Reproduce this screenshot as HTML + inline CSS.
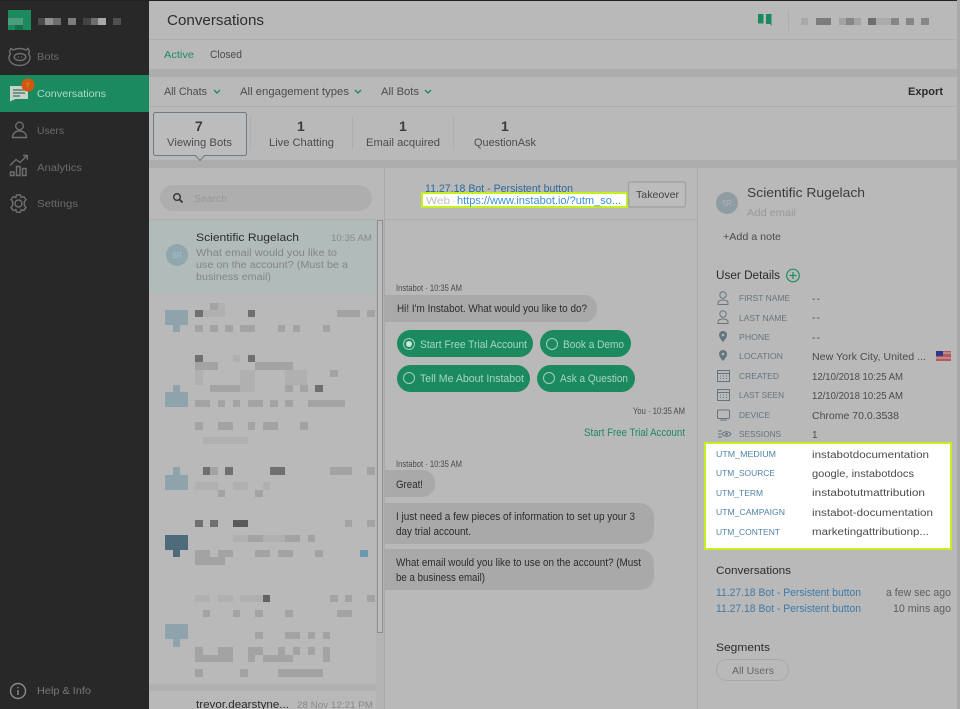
<!DOCTYPE html>
<html><head><meta charset="utf-8"><title>Conversations</title>
<style>
html,body{margin:0;padding:0;width:960px;height:709px;overflow:hidden;background:#b9b9b9}
svg{display:block;filter:blur(.35px)}
text{font-family:"Liberation Sans",sans-serif;font-size:10.5px;fill:#4c4c4c}
.side{fill:#6b6b6b;font-size:10.5px}
.lab{font-size:8.5px;fill:#64757f}
.val{font-size:10px;fill:#4c4c4c}
.utm{font-size:8.5px;fill:#4f83a8}
.uv{font-size:10px;fill:#4a4a4a}
.chat{font-size:11px;fill:#2c2c2c}
.btn{font-size:11px;fill:#a8d6c2}
.meta{font-size:9px;fill:#4c4c4c}
.prev{font-size:10.5px;fill:#858585}
.i{fill:none;stroke:#6f6f6f;stroke-width:1.4}
.d{fill:#a3a3a3}.k{fill:#707070}.l{fill:#b0b0b0}.a{fill:#8fa3ad}
</style></head><body>
<svg width="960" height="709" viewBox="0 0 960 709" xmlns="http://www.w3.org/2000/svg">
<rect width="960" height="709" fill="#b9b9b9"/>
<rect width="960" height="1" fill="#222"/>
<rect x="957" y="0" width="3" height="709" fill="#a9a9a9"/>

<!-- sidebar -->
<rect x="0" y="1" width="149" height="708" fill="#282828"/>
<rect x="0" y="75" width="149" height="37" fill="#1b8a5e"/>
<rect x="8" y="10" width="23" height="20" fill="#1b8a5e"/>
<rect x="8" y="18" width="15" height="7" fill="#4f9c7d"/>
<rect x="15" y="25" width="8" height="5" fill="#14704b"/>
<g fill="#6e6e6e"><rect x="38" y="18" width="7" height="7" fill="#4a4a4a"/><rect x="45" y="18" width="8" height="7" fill="#8f8f8f"/><rect x="53" y="18" width="8" height="7"/><rect x="68" y="18" width="8" height="7" fill="#7c7c7c"/><rect x="83" y="18" width="8" height="7" fill="#444"/><rect x="91" y="18" width="7" height="7"/><rect x="98" y="18" width="8" height="7" fill="#a8a8a8"/><rect x="113" y="18" width="8" height="7" fill="#505050"/></g>

<g class="i">
<path d="M13 50l-2-1.500-1.500 3 1 2.500c-1 1-1.500 2-1.500 3.500c0 4.500 4.500 8 10.500 8s10.500-3.500 10.500-8c0-1.500-.5-2.500-1.500-3.500l1-2.500-1.500-3-2 1.500c-2-1-4.500-1.500-6.500-1.500s-4.500.5-6.500 1.500z"/>
<ellipse cx="20" cy="57" rx="5.800" ry="3.500"/>
<path d="M18 57h.8M21.200 57h.8" stroke-width="1.600"/>
<circle cx="19.500" cy="126" r="3.800"/>
<path d="M12.500 137.500c0-4 3-6.500 7-6.500s7 2.500 7 6.500z"/>
<path d="M10.500 172h3.500v3.500h-3.500zM16.500 166.500h3.500v9h-3.500zM22.500 168.500h3.500v7h-3.500zM10 165.500l6-6 4 3 7-7M23 155.500h4.300v4.300"/>
<circle cx="18.500" cy="203.500" r="3.500"/>
<path d="M16.500 195h4l.7 2.600 2.500-1 2.300 3-1.700 2.100v3.800l1.700 2.100-2.300 3-2.500-1-.7 2.600h-4l-.7-2.600-2.500 1-2.300-3 1.700-2.100v-3.800l-1.700-2.100 2.300-3 2.500 1z"/>
<circle cx="18" cy="691" r="7.500" stroke="#8a8a8a"/>
<path d="M18 690v5M18 687v1.200" stroke="#8a8a8a"/>
</g>
<path d="M10 86h18v13H15.500l-5.500 2.500z" fill="#c3d3ca"/>
<path d="M13 90h12M13 93h12M13 96h7" stroke="#4c6f5f" stroke-width="1.200"/>
<circle cx="28" cy="85" r="6.500" fill="#d4570f"/>
<text x="26" y="87.500" style="font-size:6px;fill:#e59a6c">7</text>

<text class="side" x="37" y="60" textLength="22" lengthAdjust="spacingAndGlyphs">Bots</text>
<text x="37" y="97" textLength="69" lengthAdjust="spacingAndGlyphs" style="fill:#aedcc6">Conversations</text>
<text class="side" x="37" y="134" textLength="27" lengthAdjust="spacingAndGlyphs">Users</text>
<text class="side" x="37" y="171" textLength="45" lengthAdjust="spacingAndGlyphs">Analytics</text>
<text class="side" x="37" y="207" textLength="41" lengthAdjust="spacingAndGlyphs">Settings</text>
<text class="side" x="37" y="694" textLength="54" lengthAdjust="spacingAndGlyphs" style="fill:#787878">Help &amp; Info</text>

<!-- top bars -->
<rect x="149" y="39" width="808" height="1" fill="#aeaeae"/>
<rect x="149" y="69" width="808" height="8" fill="#adadad"/>
<rect x="149" y="106" width="808" height="1" fill="#aeaeae"/>
<rect x="149" y="160" width="808" height="8" fill="#adadad"/>
<text x="167" y="25" textLength="97" lengthAdjust="spacingAndGlyphs" style="font-size:14.500px;fill:#2e2e2e">Conversations</text>
<text x="164" y="58" textLength="30" lengthAdjust="spacingAndGlyphs" style="fill:#1f8a60">Active</text>
<text x="210" y="58" textLength="32" lengthAdjust="spacingAndGlyphs" style="font-size:11px">Closed</text>
<path d="M758 14h5.500v9.500h-5.500zM766 14h5.500v10l.5 2-2-2h-4z" fill="#1b8a5e"/>
<rect x="788" y="10" width="1" height="21" fill="#adadad"/>
<g class="d"><rect x="801" y="18" width="7" height="7" fill="#a9a9a9"/><rect x="816" y="18" width="15" height="7" fill="#7c7c7c"/><rect x="839" y="18" width="22" height="7"/><rect x="846" y="18" width="8" height="7" fill="#868686"/><rect x="868" y="18" width="8" height="7" fill="#6e6e6e"/><rect x="876" y="18" width="15" height="7" fill="#ababab"/><rect x="891" y="18" width="8" height="7" fill="#868686"/><rect x="906" y="18" width="8" height="7" fill="#868686"/><rect x="921" y="18" width="8" height="7" fill="#868686"/></g>

<text x="164" y="95" textLength="43" lengthAdjust="spacingAndGlyphs" style="font-size:11px">All Chats</text>
<text x="240" y="95" textLength="109" lengthAdjust="spacingAndGlyphs" style="font-size:11px">All engagement types</text>
<text x="381" y="95" textLength="38" lengthAdjust="spacingAndGlyphs" style="font-size:11px">All Bots</text>
<g fill="none" stroke="#1f8a60" stroke-width="1.400"><path d="M214 90l3 3 3-3M355 90l3 3 3-3M425 90l3 3 3-3"/></g>
<text x="908" y="95" textLength="35" lengthAdjust="spacingAndGlyphs" style="font-size:11px;font-weight:bold;fill:#2b2b2b">Export</text>

<path d="M155.500 112.500h89a2 2 0 0 1 2 2v39a2 2 0 0 1-2 2h-40l-4.500 5-4.500-5h-40a2 2 0 0 1-2-2v-39a2 2 0 0 1 2-2z" fill="#bcbcbc" stroke="#6b7d85"/>
<g fill="#aeaeae"><rect x="250" y="116" width="1" height="34"/><rect x="352" y="116" width="1" height="34"/><rect x="453" y="116" width="1" height="34"/></g>
<text x="195" y="131" style="font-size:14px;font-weight:bold;fill:#3c3c3c">7</text>
<text x="297" y="131" style="font-size:14px;font-weight:bold;fill:#3c3c3c">1</text>
<text x="399" y="131" style="font-size:14px;font-weight:bold;fill:#3c3c3c">1</text>
<text x="501" y="131" style="font-size:14px;font-weight:bold;fill:#3c3c3c">1</text>
<text x="167" y="146" textLength="65" lengthAdjust="spacingAndGlyphs" style="font-size:11px">Viewing Bots</text>
<text x="269" y="146" textLength="65" lengthAdjust="spacingAndGlyphs" style="font-size:11px">Live Chatting</text>
<text x="366" y="146" textLength="74" lengthAdjust="spacingAndGlyphs" style="font-size:11px">Email acquired</text>
<text x="474" y="146" textLength="62" lengthAdjust="spacingAndGlyphs" style="font-size:11px">QuestionAsk</text>

<!-- column dividers -->
<rect x="384" y="168" width="1" height="541" fill="#aaa"/>
<rect x="697" y="168" width="1" height="541" fill="#aaa"/>

<!-- list -->
<rect x="160" y="185" width="212" height="26" rx="13" fill="#aeaeae"/>
<circle cx="177" cy="197" r="3.300" fill="none" stroke="#333" stroke-width="1.400"/>
<path d="M179.500 199.500l3 3" stroke="#333" stroke-width="1.600"/>
<text x="194" y="202" textLength="33" lengthAdjust="spacingAndGlyphs" style="fill:#979797">Search</text>
<rect x="149" y="219" width="235" height="1" fill="#aeaeae"/>
<rect x="149" y="220" width="227" height="73" fill="#b1bbba"/>
<rect x="376" y="219" width="8" height="490" fill="#b4b4b4"/>
<rect x="377.500" y="220.500" width="5" height="412" fill="#bcbcbc" stroke="#8f8f8f"/>
<circle cx="177" cy="255" r="11" fill="#8fa7ad"/>
<text x="172" y="258" textLength="10" lengthAdjust="spacingAndGlyphs" style="font-size:8px;fill:#aac0c6">SR</text>
<text x="196" y="241" textLength="103" lengthAdjust="spacingAndGlyphs" style="font-size:11px;fill:#2c2c2c">Scientific Rugelach</text>
<text x="331" y="241" textLength="41" lengthAdjust="spacingAndGlyphs" style="font-size:9.500px;fill:#8a8a8a">10:35 AM</text>
<text class="prev" x="196" y="256" textLength="141" lengthAdjust="spacingAndGlyphs">What email would you like to</text>
<text class="prev" x="196" y="268" textLength="152" lengthAdjust="spacingAndGlyphs">use on the account? (Must be a</text>
<text class="prev" x="196" y="280" textLength="75" lengthAdjust="spacingAndGlyphs">business email)</text>

<!-- pixelated rows -->
<g>
<path class="a" d="M165 310h23v15h-8v7h-7v-7h-8z"/>
<path class="a" d="M173 385h7v7h8v15h-23v-15h8z"/>
<path class="a" d="M165 475h8v-8h7v8h8v15h-23z"/>
<path d="M165 535h23v15h-8v7h-7v-7h-8z" fill="#4d6b7a"/>
<path class="a" d="M165 624h23v15h-8v8h-7v-8h-8z"/>
<g class="k">
<rect x="195" y="310" width="8" height="7"/><rect x="248" y="310" width="7" height="7"/>
<rect x="195" y="355" width="8" height="7"/><rect x="248" y="355" width="7" height="7"/>
<rect x="203" y="467" width="7" height="8"/><rect x="225" y="467" width="8" height="8"/><rect x="270" y="467" width="15" height="8"/>
<rect x="195" y="520" width="8" height="7"/><rect x="210" y="520" width="8" height="7"/><rect x="233" y="520" width="15" height="7" fill="#5a5a5a"/>
<rect x="263" y="595" width="7" height="7" fill="#636363"/>
<rect x="315" y="385" width="8" height="7"/>
</g>
<g class="d">
<rect x="210" y="303" width="8" height="7"/><rect x="337" y="310" width="23" height="7"/><rect x="367" y="310" width="8" height="7"/>
<rect x="195" y="325" width="8" height="7"/><rect x="210" y="325" width="8" height="7"/><rect x="225" y="325" width="8" height="7"/><rect x="240" y="325" width="15" height="7"/><rect x="278" y="325" width="7" height="7"/><rect x="293" y="325" width="7" height="7"/><rect x="323" y="325" width="7" height="7"/>
<rect x="195" y="362" width="23" height="8"/><rect x="255" y="362" width="38" height="8"/><rect x="330" y="370" width="8" height="7"/>
<rect x="210" y="385" width="30" height="7"/><rect x="285" y="385" width="8" height="7"/><rect x="300" y="385" width="8" height="7"/>
<rect x="195" y="400" width="15" height="7"/><rect x="218" y="400" width="7" height="7"/><rect x="233" y="400" width="7" height="7"/><rect x="248" y="400" width="15" height="7"/><rect x="270" y="400" width="8" height="7"/><rect x="285" y="400" width="8" height="7"/><rect x="308" y="400" width="37" height="7"/>
<rect x="195" y="422" width="8" height="8"/><rect x="218" y="422" width="15" height="8"/><rect x="248" y="422" width="7" height="8"/><rect x="263" y="422" width="15" height="8"/><rect x="300" y="422" width="8" height="8"/>
<rect x="210" y="467" width="8" height="8"/><rect x="330" y="467" width="22" height="8"/><rect x="367" y="467" width="8" height="8"/>
<rect x="218" y="490" width="7" height="7"/><rect x="255" y="490" width="8" height="7"/>
<rect x="345" y="520" width="7" height="7"/><rect x="367" y="520" width="8" height="7"/>
<rect x="248" y="535" width="15" height="7"/><rect x="285" y="535" width="15" height="7"/><rect x="308" y="535" width="7" height="7"/>
<rect x="195" y="550" width="15" height="7"/><rect x="218" y="550" width="15" height="7"/><rect x="255" y="550" width="15" height="7"/><rect x="278" y="550" width="15" height="7"/><rect x="315" y="550" width="8" height="7"/>
<rect x="195" y="557" width="8" height="8"/><rect x="203" y="557" width="22" height="8"/>
<rect x="330" y="595" width="8" height="7"/><rect x="345" y="595" width="7" height="7"/><rect x="367" y="595" width="8" height="7"/>
<rect x="203" y="610" width="7" height="7"/><rect x="233" y="610" width="7" height="7"/><rect x="255" y="610" width="8" height="7"/><rect x="285" y="610" width="8" height="7"/><rect x="337" y="610" width="15" height="7"/>
<rect x="255" y="632" width="8" height="7"/><rect x="285" y="632" width="15" height="7"/><rect x="308" y="632" width="7" height="7"/><rect x="323" y="632" width="7" height="7"/>
<rect x="195" y="647" width="8" height="8"/><rect x="218" y="647" width="15" height="15"/><rect x="248" y="647" width="15" height="8"/><rect x="278" y="647" width="7" height="8"/><rect x="293" y="647" width="7" height="8"/><rect x="308" y="647" width="7" height="8"/><rect x="323" y="647" width="7" height="15"/>
<rect x="195" y="655" width="38" height="7"/><rect x="248" y="655" width="7" height="7"/><rect x="263" y="655" width="30" height="7"/>
<rect x="195" y="669" width="8" height="8"/><rect x="240" y="669" width="8" height="8"/><rect x="278" y="669" width="45" height="8"/>
</g>
<g class="l">
<rect x="218" y="303" width="7" height="14"/><rect x="203" y="310" width="15" height="7"/>
<rect x="233" y="355" width="7" height="7"/><rect x="195" y="370" width="8" height="15"/><rect x="240" y="370" width="15" height="22"/><rect x="285" y="370" width="22" height="15"/>
<rect x="203" y="437" width="45" height="7"/><rect x="195" y="482" width="23" height="8"/><rect x="233" y="482" width="15" height="8"/><rect x="263" y="482" width="7" height="8"/>
<rect x="195" y="595" width="15" height="7"/><rect x="218" y="595" width="15" height="7"/><rect x="240" y="595" width="23" height="7"/>
<rect x="233" y="535" width="15" height="7"/><rect x="263" y="535" width="22" height="7"/>
</g>
<rect x="360" y="550" width="8" height="7" fill="#6b9ab0"/>
<rect x="149" y="684" width="227" height="7" fill="#b1b1b1"/>
</g>
<text x="196" y="708" textLength="93" lengthAdjust="spacingAndGlyphs" style="font-size:11px;fill:#2c2c2c">trevor.dearstyne...</text>
<text x="297" y="708" textLength="76" lengthAdjust="spacingAndGlyphs" style="font-size:9.500px;fill:#8a8a8a">28 Nov 12:21 PM</text>

<!-- chat header -->
<rect x="385" y="219" width="312" height="1" fill="#aeaeae"/>
<text x="425" y="192" textLength="148" lengthAdjust="spacingAndGlyphs" style="fill:#2f6a99;font-size:11px">11.27.18 Bot - Persistent button</text>
<rect x="422" y="193" width="205" height="14" fill="#fff" stroke="#c6ef1e" stroke-width="2"/>
<text x="426" y="204" textLength="24" lengthAdjust="spacingAndGlyphs" style="fill:#bdbdbd">Web</text>
<text x="452" y="204" style="fill:#bdbdbd">·</text>
<text x="457" y="204" textLength="164" lengthAdjust="spacingAndGlyphs" style="fill:#3a8fd9;font-size:11px">https://www.instabot.io/?utm_so...</text>
<rect x="628.500" y="182" width="57" height="25" rx="2" fill="#bcbcbc" stroke="#a3a3a3" stroke-width="1.500"/>
<text x="636" y="198" textLength="43" lengthAdjust="spacingAndGlyphs" style="fill:#444">Takeover</text>

<!-- chat body -->
<text class="meta" x="396" y="291" textLength="66" lengthAdjust="spacingAndGlyphs">Instabot · 10:35 AM</text>
<path d="M385 295h202a14 14 0 0 1 0 27H385z" fill="#a9a9a9"/>
<text class="chat" x="397" y="312" textLength="190" lengthAdjust="spacingAndGlyphs">Hi! I'm Instabot. What would you like to do?</text>
<g fill="#1b8a5e">
<rect x="397" y="330" width="136" height="27" rx="13.500"/>
<rect x="540" y="330" width="91" height="27" rx="13.500"/>
<rect x="397" y="365" width="133" height="27" rx="13.500"/>
<rect x="537" y="365" width="98" height="27" rx="13.500"/>
</g>
<g fill="none" stroke="#9fd2bc">
<circle cx="409" cy="344" r="5.500"/><circle cx="552" cy="344" r="5.500"/><circle cx="409" cy="378" r="5.500"/><circle cx="549" cy="378" r="5.500"/>
</g>
<circle cx="409" cy="344" r="3" fill="#cfe8dc"/>
<text class="btn" x="420" y="348" textLength="107" lengthAdjust="spacingAndGlyphs">Start Free Trial Account</text>
<text class="btn" x="563" y="348" textLength="61" lengthAdjust="spacingAndGlyphs">Book a Demo</text>
<text class="btn" x="420" y="382" textLength="104" lengthAdjust="spacingAndGlyphs">Tell Me About Instabot</text>
<text class="btn" x="560" y="382" textLength="68" lengthAdjust="spacingAndGlyphs">Ask a Question</text>
<text class="meta" x="633" y="414" textLength="52" lengthAdjust="spacingAndGlyphs">You · 10:35 AM</text>
<text x="584" y="436" textLength="101" lengthAdjust="spacingAndGlyphs" style="font-size:11px;fill:#1b8a5e">Start Free Trial Account</text>
<text class="meta" x="396" y="467" textLength="66" lengthAdjust="spacingAndGlyphs">Instabot · 10:35 AM</text>
<g fill="#a9a9a9">
<path d="M385 470h37a13 13 0 0 1 0 27H385z"/>
<path d="M385 503h255a14 14 0 0 1 14 14v13a14 14 0 0 1-14 14H385z"/>
<path d="M385 549h255a14 14 0 0 1 14 14v13a14 14 0 0 1-14 14H385z"/>
</g>
<text class="chat" x="396" y="488" textLength="27" lengthAdjust="spacingAndGlyphs">Great!</text>
<text class="chat" x="396" y="520" textLength="239" lengthAdjust="spacingAndGlyphs">I just need a few pieces of information to set up your 3</text>
<text class="chat" x="396" y="535" textLength="75" lengthAdjust="spacingAndGlyphs">day trial account.</text>
<text class="chat" x="396" y="566" textLength="245" lengthAdjust="spacingAndGlyphs">What email would you like to use on the account? (Must</text>
<text class="chat" x="396" y="581" textLength="89" lengthAdjust="spacingAndGlyphs">be a business email)</text>

<!-- right panel -->
<circle cx="727" cy="203" r="11" fill="#8f9ca3"/>
<text x="722" y="206" textLength="10" lengthAdjust="spacingAndGlyphs" style="font-size:8px;fill:#aab6bb">SR</text>
<text x="747" y="197" textLength="118" lengthAdjust="spacingAndGlyphs" style="font-size:13px;fill:#3c3c3c">Scientific Rugelach</text>
<text x="747" y="216" textLength="49" lengthAdjust="spacingAndGlyphs" style="fill:#999">Add email</text>
<text x="723" y="240" textLength="58" lengthAdjust="spacingAndGlyphs">+Add a note</text>
<text x="716" y="279" textLength="64" lengthAdjust="spacingAndGlyphs" style="font-size:11.500px;fill:#2c2c2c">User Details</text>
<circle cx="793" cy="275.500" r="6.300" fill="none" stroke="#1f8f63" stroke-width="1.200"/>
<path d="M789.500 275.500h7M793 272v7" stroke="#1f8f63" stroke-width="1.300"/>

<g fill="none" stroke="#64757f" stroke-width="1">
<circle cx="723" cy="295" r="3.200"/><path d="M718 304.500v-1.500c0-2 2-3 5-3s5 1 5 3v1.500z"/>
<circle cx="723" cy="314" r="3.200"/><path d="M718 323.500v-1.500c0-2 2-3 5-3s5 1 5 3v1.500z"/>
<rect x="717.500" y="370.500" width="12" height="11"/><path d="M717.500 373.500h12M720 376h1M723 376h1M726 376h1M720 378.500h1M723 378.500h1M726 378.500h1"/>
<rect x="717.500" y="389.500" width="12" height="11"/><path d="M717.500 392.500h12M720 395h1M723 395h1M726 395h1M720 397.500h1M723 397.500h1M726 397.500h1"/>
<rect x="717.500" y="410" width="12" height="8.500" rx="1"/><path d="M720 420h7"/>
<path d="M718 431h4M718 434h3M718 437h4M722 434c2-3 7-3 9 0c-2 3-7 3-9 0z"/>
</g>
<circle cx="726.500" cy="434" r="1.300" fill="#64757f"/>
<g fill="#64757f">
<path d="M723 331a4 4 0 0 1 4 4c0 3-4 7-4 7s-4-4-4-7a4 4 0 0 1 4-4z"/>
<path d="M723 350a4 4 0 0 1 4 4c0 3-4 7-4 7s-4-4-4-7a4 4 0 0 1 4-4z"/>
</g>
<circle cx="723" cy="335" r="1.300" fill="#b9b9b9"/><circle cx="723" cy="354" r="1.300" fill="#b9b9b9"/>

<text class="lab" x="739" y="301" textLength="51" lengthAdjust="spacingAndGlyphs">FIRST NAME</text>
<text class="lab" x="739" y="321" textLength="48" lengthAdjust="spacingAndGlyphs">LAST NAME</text>
<text class="lab" x="739" y="340" textLength="31" lengthAdjust="spacingAndGlyphs">PHONE</text>
<text class="lab" x="739" y="359" textLength="44" lengthAdjust="spacingAndGlyphs">LOCATION</text>
<text class="lab" x="739" y="379" textLength="40" lengthAdjust="spacingAndGlyphs">CREATED</text>
<text class="lab" x="739" y="398" textLength="45" lengthAdjust="spacingAndGlyphs">LAST SEEN</text>
<text class="lab" x="739" y="418" textLength="31" lengthAdjust="spacingAndGlyphs">DEVICE</text>
<text class="lab" x="739" y="437" textLength="42" lengthAdjust="spacingAndGlyphs">SESSIONS</text>
<text class="val" x="812" y="302" textLength="8">--</text>
<text class="val" x="812" y="321" textLength="8">--</text>
<text class="val" x="812" y="341" textLength="8">--</text>
<text class="val" x="812" y="360" textLength="114" lengthAdjust="spacingAndGlyphs">New York City, United ...</text>
<text class="val" x="812" y="380" textLength="91" lengthAdjust="spacingAndGlyphs">12/10/2018 10:25 AM</text>
<text class="val" x="812" y="399" textLength="91" lengthAdjust="spacingAndGlyphs">12/10/2018 10:25 AM</text>
<text class="val" x="812" y="419" textLength="87" lengthAdjust="spacingAndGlyphs">Chrome 70.0.3538</text>
<text class="val" x="812" y="438">1</text>
<rect x="936" y="351" width="15" height="10" fill="#b85a5a"/>
<rect x="936" y="351" width="7" height="5" fill="#2c3a8a"/>
<path d="M943 353h8M936 358h15" stroke="#bcbcbc" stroke-width="1"/>

<rect x="705" y="443" width="246" height="106" fill="#fff" stroke="#c6ef1e" stroke-width="2"/>
<text class="utm" x="716" y="457" textLength="60" lengthAdjust="spacingAndGlyphs">UTM_MEDIUM</text>
<text class="utm" x="716" y="476" textLength="59" lengthAdjust="spacingAndGlyphs">UTM_SOURCE</text>
<text class="utm" x="716" y="496" textLength="47" lengthAdjust="spacingAndGlyphs">UTM_TERM</text>
<text class="utm" x="716" y="515" textLength="69" lengthAdjust="spacingAndGlyphs">UTM_CAMPAIGN</text>
<text class="utm" x="716" y="535" textLength="64" lengthAdjust="spacingAndGlyphs">UTM_CONTENT</text>
<text class="uv" x="812" y="458" textLength="117" lengthAdjust="spacingAndGlyphs">instabotdocumentation</text>
<text class="uv" x="812" y="477" textLength="102" lengthAdjust="spacingAndGlyphs">google, instabotdocs</text>
<text class="uv" x="812" y="496" textLength="113" lengthAdjust="spacingAndGlyphs">instabotutmattribution</text>
<text class="uv" x="812" y="516" textLength="121" lengthAdjust="spacingAndGlyphs">instabot-documentation</text>
<text class="uv" x="812" y="535" textLength="117" lengthAdjust="spacingAndGlyphs">marketingattributionp...</text>

<text x="716" y="574" textLength="75" lengthAdjust="spacingAndGlyphs" style="font-size:11px;fill:#2c2c2c">Conversations</text>
<text x="716" y="596" textLength="145" lengthAdjust="spacingAndGlyphs" style="fill:#3f7aa8;font-size:11px">11.27.18 Bot - Persistent button</text>
<text x="886" y="596" textLength="65" lengthAdjust="spacingAndGlyphs" style="fill:#5e5e5e;font-size:11px">a few sec ago</text>
<text x="716" y="612" textLength="145" lengthAdjust="spacingAndGlyphs" style="fill:#3f7aa8;font-size:11px">11.27.18 Bot - Persistent button</text>
<text x="893" y="612" textLength="58" lengthAdjust="spacingAndGlyphs" style="fill:#5e5e5e;font-size:11px">10 mins ago</text>
<text x="716" y="651" textLength="54" lengthAdjust="spacingAndGlyphs" style="font-size:11px;fill:#2c2c2c">Segments</text>
<rect x="716.500" y="659.500" width="72" height="21" rx="10.500" fill="none" stroke="#a8a8a8"/>
<text x="732" y="674" textLength="42" lengthAdjust="spacingAndGlyphs" style="fill:#666">All Users</text>
</svg>
</body></html>
